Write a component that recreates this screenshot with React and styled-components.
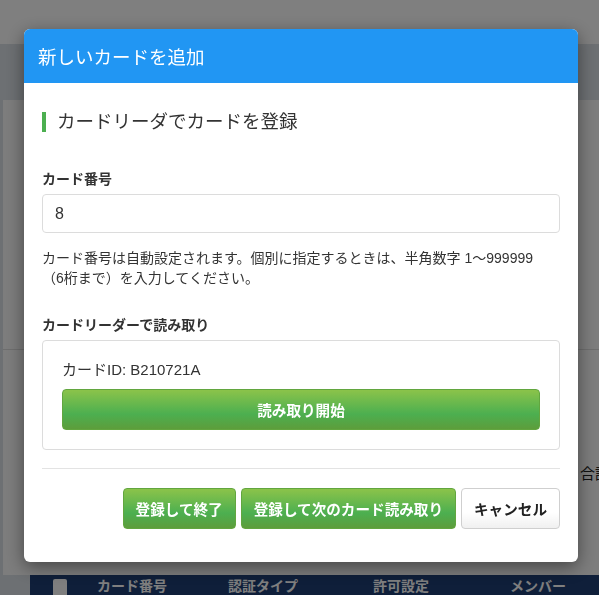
import styled, { createGlobalStyle } from "styled-components";

const GlobalStyle = createGlobalStyle`
  html, body {
    margin: 0;
    padding: 0;
  }
  body {
    font-family: "Liberation Sans", "Noto Sans CJK JP", sans-serif;
    background: #dbe1e7;
    color: #333;
    overflow: hidden;
  }
  * {
    box-sizing: border-box;
  }
`;

const Page = styled.div`
  width: 599px;
  height: 595px;
  overflow: hidden;
`;

const TopBar = styled.header`
  height: 44px;
  background: #ffffff;
`;

const Main = styled.main`
  padding: 56px 0 0 3px;
`;

const PageCard = styled.section`
  background: #fafafa;
  height: 475px;
  display: flex;
  flex-direction: column;
`;

const PageTop = styled.div`
  height: 250px;
  border-bottom: 1px solid #ddd;
`;

const TotalRow = styled.div`
  display: flex;
  justify-content: flex-start;
  padding: 112px 0 0 577px;
  font-size: 15px;
  color: #222;
  white-space: nowrap;
`;

const TableHead = styled.div`
  margin-left: 27px;
  height: 40px;
  background: #1e3e74;
  display: flex;
  align-items: flex-start;
  padding-top: 1px;
  color: #fff;
  font-weight: bold;
  font-size: 14px;
  white-space: nowrap;
`;

const HeadCell = styled.div`
  width: ${(p) => p.$w}px;
  flex-shrink: 0;
  line-height: 20px;
`;

const CheckBox = styled.div`
  width: 14px;
  height: 20px;
  margin: 3px 30px 0 23px;
  background: #fff;
  border-radius: 2px;
  flex-shrink: 0;
`;

const Backdrop = styled.div`
  position: fixed;
  inset: 0;
  background: rgba(0, 0, 0, 0.5);
  display: flex;
  align-items: flex-start;
  padding: 29px 0 0 24px;
`;

const Modal = styled.div`
  width: 554px;
  background: #fff;
  border-radius: 6px;
  overflow: hidden;
  box-shadow: 0 5px 18px rgba(0, 0, 0, 0.45);
  font-family: "Liberation Sans", "Noto Sans CJK JP", sans-serif;
`;

const ModalHeader = styled.div`
  height: 54px;
  background: #2196f3;
  color: #fff;
  font-size: 18.5px;
  display: flex;
  align-items: center;
  padding: 0 14px;
`;

const ModalBody = styled.div`
  padding: 26px 18px 0;
`;

const SectionTitle = styled.h3`
  margin: 0;
  font-size: 18.5px;
  font-weight: normal;
  line-height: 26px;
  color: #333;
  display: flex;
  align-items: center;
  &::before {
    content: "";
    width: 4px;
    height: 20px;
    background: #4caf50;
    margin-right: 11px;
  }
`;

const Field = styled.div`
  margin-top: ${(p) => p.$top}px;
`;

const Label = styled.label`
  display: block;
  font-size: 14px;
  font-weight: bold;
  line-height: 20px;
  color: #333;
  margin-bottom: 5px;
`;

const Input = styled.input`
  display: block;
  width: 100%;
  height: 39px;
  border: 1px solid #dcdcdc;
  border-radius: 4px;
  padding: 0 12px;
  font-size: 16px;
  font-family: inherit;
  color: #333;
`;

const Help = styled.p`
  margin: 15px 0 0;
  font-size: 14px;
  line-height: 20px;
  color: #333;
`;

const ReaderBox = styled.div`
  border: 1px solid #dcdcdc;
  border-radius: 4px;
  padding: 19px;
  display: flex;
  flex-direction: column;
  gap: 9px;
`;

const CardId = styled.div`
  font-size: 15px;
  line-height: 20px;
  color: #333;
`;

const Button = styled.button`
  height: 41px;
  border-radius: 4px;
  padding: 0 12px;
  font-family: inherit;
  font-size: 14.6px;
  font-weight: bold;
  cursor: pointer;
  border: 1px solid ${(p) => (p.$variant === "green" ? "#62a63f" : "#cfcfcf")};
  color: ${(p) => (p.$variant === "green" ? "#fff" : "#222")};
  background: ${(p) =>
    p.$variant === "green"
      ? "linear-gradient(to bottom, #8bc34a 0%, #4caf50 62%, #5d9d3b 100%)"
      : "linear-gradient(to bottom, #ffffff 0%, #ffffff 60%, #f0f0f0 100%)"};
`;

const WideButton = styled(Button)`
  width: 100%;
`;

const Divider = styled.hr`
  margin: 18px 0 0;
  border: none;
  border-top: 1px solid #e3e3e3;
`;

const Footer = styled.div`
  display: flex;
  justify-content: flex-end;
  gap: 5px;
  padding: 19px 0 33px;
`;

export default function App() {
  return (
    <Page>
      <GlobalStyle />
      <TopBar />
      <Main>
        <PageCard>
          <PageTop />
          <TotalRow>合計</TotalRow>
        </PageCard>
        <TableHead>
          <CheckBox />
          <HeadCell $w={131}>カード番号</HeadCell>
          <HeadCell $w={145}>認証タイプ</HeadCell>
          <HeadCell $w={137}>許可設定</HeadCell>
          <HeadCell $w={100}>メンバー</HeadCell>
        </TableHead>
      </Main>
      <Backdrop>
        <Modal>
          <ModalHeader>新しいカードを追加</ModalHeader>
          <ModalBody>
            <SectionTitle>カードリーダでカードを登録</SectionTitle>
            <Field $top={34}>
              <Label>カード番号</Label>
              <Input defaultValue="8" />
              <Help>
                カード番号は自動設定されます。個別に指定するときは、半角数字 1〜999999
                <br />
                （6桁まで）を入力してください。
              </Help>
            </Field>
            <Field $top={27}>
              <Label>カードリーダーで読み取り</Label>
              <ReaderBox>
                <CardId>カードID: B210721A</CardId>
                <WideButton $variant="green">読み取り開始</WideButton>
              </ReaderBox>
            </Field>
            <Divider />
            <Footer>
              <Button $variant="green">登録して終了</Button>
              <Button $variant="green">登録して次のカード読み取り</Button>
              <Button>キャンセル</Button>
            </Footer>
          </ModalBody>
        </Modal>
      </Backdrop>
    </Page>
  );
}
